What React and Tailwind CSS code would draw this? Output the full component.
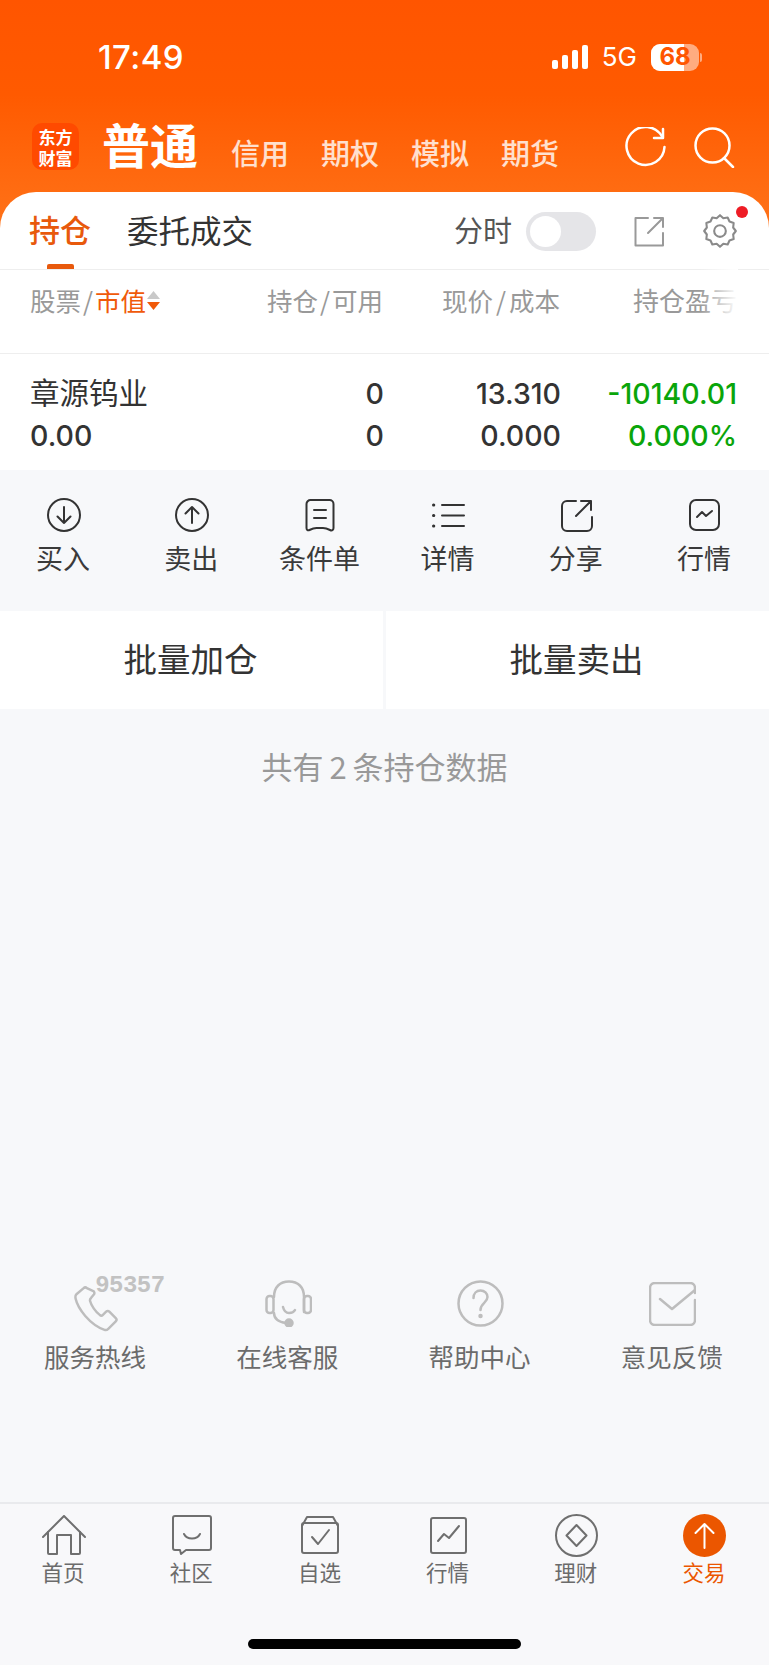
const CJK = '"Noto Sans CJK SC","Noto Sans",sans-serif';
const NUM = 'Inter,"Noto Sans CJK SC",sans-serif';

const Ic = ({ w, h, vb, children, color = '#333', sw = 2, cls = '' }) => (
  <svg width={w} height={h} viewBox={vb || `0 0 ${w} ${h}`} fill="none" stroke={color} strokeWidth={sw} strokeLinecap="round" strokeLinejoin="round" className={cls}>{children}</svg>
);

const actions = [
  ['买入', <Ic w={34} h={34}><circle cx="17" cy="17" r="16" /><path d="M17 9v16M10.5 18.5 17 25l6.5-6.5" /></Ic>],
  ['卖出', <Ic w={34} h={34}><circle cx="17" cy="17" r="16" /><path d="M17 25V9M10.5 15.500 17 9l6.500 6.500" /></Ic>],
  ['条件单', <Ic w={30} h={33}><path d="M1.500 5a4 4 0 0 1 4-4h19a4 4 0 0 1 4 4v24c0 2-1.500 3-3.500 2-3-1.500-4.500-2-7-2h-6.500c-2.500 0-4 .5-7 2-1.500.8-3 0-3-2z" /><path d="M9 11h12M9 19h12" /></Ic>],
  ['详情', <Ic w={33} h={27}><path d="M10 3h22M10 13.500h22M10 24h22" /><path d="M1.500 3h.3M1.500 13.500h.3M1.500 24h.3" strokeWidth="3" /></Ic>],
  ['分享', <Ic w={32} h={33}><path d="M15 2H6a5 5 0 0 0-5 5v20a5 5 0 0 0 5 5h20a5 5 0 0 0 5-5v-9" /><path d="M15 17 30 2M20 2h10v9" /></Ic>],
  ['行情', <Ic w={31} h={32}><rect x="1" y="1" width="29" height="30" rx="6" /><path d="M8 18l5-5 4 4 6-5" /></Ic>],
];

const services = [
  ['服务热线', <div className="relative w-[42px] h-[47px] -translate-x-[1px]">
    <Ic w={45} h={46} vb="0 0 42 43" color="#bdbdbd" sw={2.300} cls="absolute left-0 top-[6px]"><path d="M9 2 2 8c-1 1-.800 2.500-.500 4 2 9 13 24 27 29 1.500.5 2.500 0 3.500-1l7-7c1-1 1-2 0-3l-6-6c-1-1-2-1-3 0l-3 3c-1 1-2 1-3 0-4-3-8-9-9-13-.3-1 0-2 1-3l2.500-3c.7-1 .7-2 0-3L12 2c-1-1-2-1-3 0z" /></Ic>
    <span className="absolute left-[21px] top-[-6px] text-[24px] leading-[24px] font-bold text-[#c2c2c2] tracking-[-0.5px]" style={{ fontFamily: '"Liberation Mono",monospace' }}>95357</span>
  </div>],
  ['在线客服', <Ic w={47} h={47} color="#bdbdbd" sw={2.500}><path d="M9 17C9 7 15 1.500 24 1.500S39 7 39 17v15" /><rect x="1.500" y="16" width="7" height="17" rx="3" /><rect x="39" y="16" width="7" height="17" rx="3" /><path d="M9 33c0 6 5 9 12 10" /><path d="M18 27c1 4 3 6 6 6s5-1 6-3" /><circle cx="24" cy="43" r="3.500" fill="#bdbdbd" /></Ic>],
  ['帮助中心', <Ic w={47} h={47} color="#bdbdbd" sw={2.500}><circle cx="23.500" cy="23.500" r="22" /><path d="M16.500 18c0-4.500 3-7.500 7-7.500s7 3 7 6.500c0 6-7 6-7 13" /><circle cx="23.500" cy="36" r="1" fill="#bdbdbd" /></Ic>],
  ['意见反馈', <Ic w={47} h={44} color="#bdbdbd" sw={2.500}><path d="M46 11V6a5 5 0 0 0-5-5H6a5 5 0 0 0-5 5v32a5 5 0 0 0 5 5h35a5 5 0 0 0 5-5V18" /><path d="M11 17l12 10L46 8" /></Ic>],
];

const tabs = [
  ['首页', <Ic w={44} h={40} color="#6f6f6f"><path d="M1 22 22 1l21 21" /><path d="M6 17v21a1 1 0 0 0 1 1h8V20h14v19h8a1 1 0 0 0 1-1V17" /></Ic>],
  ['社区', <Ic w={40} h={40} color="#6f6f6f"><path d="M3 1h34a2 2 0 0 1 2 2v30a2 2 0 0 1-2 2H14l-5 4-1-4H3a2 2 0 0 1-2-2V3a2 2 0 0 1 2-2z" /><path d="M12 19c3 6 13 6 16 0" /></Ic>],
  ['自选', <Ic w={38} h={38} color="#6f6f6f"><path d="M1 10 6 1h26l5 9" /><rect x="1" y="7" width="36" height="30" rx="2" /><path d="M11 21l6 7L28 14" /></Ic>],
  ['行情', <Ic w={37} h={37} color="#6f6f6f"><rect x="1" y="1" width="35" height="35" rx="2" /><path d="M8 24l6-7 5 4 10-12" /></Ic>],
  ['理财', <Ic w={43} h={43} color="#6f6f6f"><circle cx="21.500" cy="21.500" r="20.500" /><path d="M21.500 11l10 10.500-10 10.500-10-10.500z" /></Ic>],
  ['交易', <svg width="43" height="43" viewBox="0 0 43 43" fill="none"><circle cx="21.500" cy="21.500" r="21.500" fill="#eb5600" /><path d="M21.500 34V10M12.500 19l9-9 9 9" stroke="#fff" strokeWidth="2" strokeLinecap="round" strokeLinejoin="round" /></svg>],
];

const rowGrid = 'grid grid-cols-[353px_178px_176px] ml-[30px]';

export default function App() {
  return (
    <div className="w-[769px] h-[1665px] overflow-hidden flex flex-col bg-[#f7f8fa]" style={{ fontFamily: CJK }}>
      <div className="bg-[linear-gradient(180deg,#ff5500_0%,#ff5a00_35%,#ff7a20_100%)] h-[269px] flex flex-col shrink-0">
        <div className="h-[123px] shrink-0 flex items-start justify-between pt-[41px] pl-[98px] pr-[67px] text-white">
          <span className="text-[33px] leading-[32px] font-medium tracking-[0.4px]" style={{ fontFamily: NUM }}>17:49</span>
          <div className="flex items-center gap-[14px] h-[32px]">
            <div className="flex items-end gap-[4px] h-[24px]">
              <div className="w-[6px] h-[9px] bg-white rounded-[2px]" />
              <div className="w-[6px] h-[14px] bg-white rounded-[2px]" />
              <div className="w-[6px] h-[19px] bg-white rounded-[2px]" />
              <div className="w-[6px] h-[24px] bg-white rounded-[2px]" />
            </div>
            <span className="text-[26px] leading-[32px] font-normal" style={{ fontFamily: NUM }}>5G</span>
            <div className="flex items-center gap-[1px]">
              <div className="relative w-[48px] h-[27px] rounded-[9px] bg-white/50 overflow-hidden">
                <div className="w-[33px] h-full bg-white" />
                <span className="absolute inset-0 flex items-center justify-center text-[24px] font-bold text-[#ff5500]" style={{ fontFamily: NUM }}>68</span>
              </div>
              <div className="w-[2px] h-[9px] bg-white/50 rounded-r" />
            </div>
          </div>
        </div>
        <div className="h-[69px] shrink-0 flex items-start pl-[32px] pr-[34px] text-white">
          <div className="w-[47px] h-[47px] rounded-[10px] bg-[#ff4a00] flex items-center justify-center text-center text-[17px] leading-[21px] font-bold shrink-0">
            <span>东方<br />财富</span>
          </div>
          <span className="ml-[23px] text-[48px] leading-[48px] font-bold -mt-[4px]">普通</span>
          <div className="flex ml-[33px] gap-[32px] text-[29px] leading-[34px] font-medium text-white/80 mt-[12px]">
            <span>信用</span><span>期权</span><span>模拟</span><span>期货</span>
          </div>
          <div className="ml-auto flex items-center gap-[28px] mt-[4px]">
            <Ic w={41} h={41} color="#fff" sw={2.500}><path d="M37 9.500A19 19 0 1 0 39.500 20" /><path d="M38 2v9H29" /></Ic>
            <Ic w={41} h={41} color="#fff" sw={2.500}><circle cx="18.500" cy="18.500" r="17" /><path d="M30 31l9 9" /></Ic>
          </div>
        </div>
        <div className="flex-1 bg-white rounded-t-[36px] border-b border-[#eeeeee] flex items-start relative pl-[29px] pr-[29px]">
          <div className="relative h-[77px] flex items-start">
            <span className="text-[31px] leading-[40px] font-medium text-[#e8590c] mt-[17px]">持仓</span>
            <div className="absolute left-[18px] bottom-0 w-[27px] h-[5px] bg-[#e8590c] rounded-t-[2px]" />
          </div>
          <span className="ml-[36px] text-[31.500px] leading-[40px] text-[#333] mt-[17px]">委托成交</span>
          <div className="ml-auto flex items-center mt-[19px] h-[40px]">
            <span className="text-[29px] leading-[40px] text-[#555] -mt-[4px]">分时</span>
            <div className="ml-[14px] w-[70px] h-[39px] rounded-full bg-[#e5e5e8] flex items-center pl-[4px]">
              <div className="w-[31px] h-[31px] rounded-full bg-white" />
            </div>
            <div className="ml-[38px]">
              <Ic w={31} h={31} color="#999" sw={2}><path d="M14 2H1.500v27.500H29V17" /><path d="M14 17 29 2M20 2h9v9" /></Ic>
            </div>
            <div className="ml-[35px] relative">
              <Ic w={40} h={40} vb="0 0 24 24" color="#8a8a8a" sw={1.250}>
                <path d="M12 2.500l2 1.800 2.600-.4 1.100 2.400 2.500.9-.3 2.700L21.500 12l-1.600 2.100.3 2.700-2.500.9-1.100 2.400-2.600-.4-2 1.800-2-1.800-2.600.4-1.100-2.400-2.500-.9.3-2.700L2.500 12l1.600-2.100-.3-2.700 2.500-.9 1.100-2.400 2.600.4z" />
                <circle cx="12" cy="12" r="3.500" />
              </Ic>
              <div className="absolute -right-[8px] -top-[5px] w-[12px] h-[12px] rounded-full bg-[#ee1c25]" />
            </div>
          </div>
        </div>
      </div>

      <div className="bg-white shrink-0">
        <div className="relative h-[85px] border-b border-[#eeeeee] text-[25.500px] leading-[32px] text-[#999] overflow-hidden">
          <div className={`${rowGrid} pt-[15px] whitespace-nowrap`}>
            <div className="flex items-center justify-between">
              <span className="flex items-center">
                <span>股票</span><span className="mx-[2px]">/</span><span className="text-[#f05a0a]">市值</span>
                <svg width="15" height="21" viewBox="0 0 15 21" className="shrink-0"><path d="M7.500 1l6.500 8H1z" fill="#c9c9c9" /><path d="M1 12h13l-6.500 8z" fill="#f05a0a" /></svg>
              </span>
              <span><span>持仓</span><span className="mx-[2px]">/</span><span>可用</span></span>
            </div>
            <div className="text-right pr-[1px]"><span>现价</span><span className="mx-[3px]">/</span><span>成本</span></div>
            <div className="text-right text-[26px]">持仓盈亏</div>
          </div>
          <div className="absolute right-[31px] top-0 w-[38px] h-full bg-gradient-to-r from-white/0 to-white" />
        </div>
        <div className={`${rowGrid} h-[116px] pt-[19px] text-[28.500px] leading-[42px] font-medium text-[#333]`} style={{ fontFamily: NUM }}>
          <div className="flex flex-col">
            <div className="flex justify-between">
              <span className="text-[29.500px] font-normal -translate-y-[3px]" style={{ fontFamily: CJK }}>章源钨业</span><span className="translate-x-[1px]">0</span>
            </div>
            <div className="flex justify-between"><span>0.00</span><span className="translate-x-[1px]">0</span></div>
          </div>
          <div className="flex flex-col text-right"><span>13.310</span><span>0.000</span></div>
          <div className="flex flex-col text-right text-[#0aa50a]"><span>-10140.01</span><span>0.000%</span></div>
        </div>
      </div>

      <div className="grid grid-cols-6 h-[141px] pt-[27px] shrink-0">
        {actions.map(([t, icon]) => (
          <div key={t} className="flex flex-col items-center">
            <div className="h-[36px] flex items-center justify-center">{icon}</div>
            <span className="mt-[5px] text-[27px] leading-[40px] text-[#3a3a3a] -translate-x-[1px]">{t}</span>
          </div>
        ))}
      </div>

      <div className="flex gap-[3px] h-[98px] shrink-0 text-[33.500px] text-[#333]">
        <div className="w-[383px] bg-white flex items-center justify-center pb-[3px] pr-[2px]">批量加仓</div>
        <div className="flex-1 bg-white flex items-center justify-center pb-[3px] pr-[2px]">批量卖出</div>
      </div>

      <div className="flex justify-center items-center text-[31px] leading-[40px] text-[#999] mt-[37px] shrink-0">
        <span>共有</span><span className="mx-[6px]">2</span><span>条持仓数据</span>
      </div>

      <div className="grid grid-cols-4 mt-[494px] shrink-0">
        {services.map(([t, icon]) => (
          <div key={t} className="flex flex-col items-center">
            <div className="h-[47px] flex items-center justify-center">{icon}</div>
            <span className="mt-[11px] text-[25.500px] leading-[36px] text-[#6b6b6b] -translate-x-[1px]">{t}</span>
          </div>
        ))}
      </div>

      <div className="mt-auto border-t-2 border-[#e9eaed] bg-[#f8f8fa] h-[163px] shrink-0 flex flex-col">
        <div className="grid grid-cols-6 pt-[8px]">
          {tabs.map(([t, icon], i) => (
            <div key={t} className="flex flex-col items-center">
              <div className="h-[46px] flex items-center justify-center">{icon}</div>
              <span className={`-mt-[2px] text-[21.500px] leading-[32px] -translate-x-[1px] ${i === 5 ? 'text-[#eb5600]' : 'text-[#6b6b6b]'}`}>{t}</span>
            </div>
          ))}
        </div>
        <div className="mt-auto mb-[16px] mx-auto w-[273px] h-[10px] rounded-full bg-black" />
      </div>
    </div>
  );
}
